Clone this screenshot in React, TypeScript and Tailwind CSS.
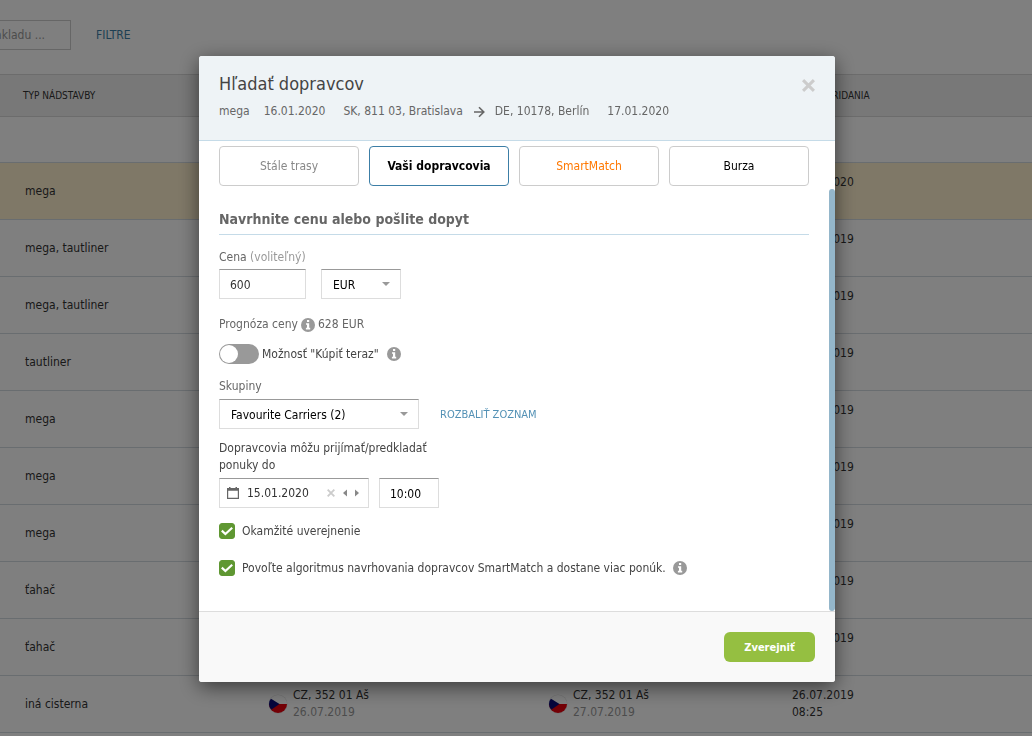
import React, { useState } from "react";

type Row = {
  type: string;
  added: string;
  time?: string;
  pickup?: string;
  delivery?: string;
  highlighted?: boolean;
};

const rows: Row[] = [
  { type: "mega", added: "16.01.2020", highlighted: true },
  { type: "mega, tautliner", added: "26.07.2019" },
  { type: "mega, tautliner", added: "26.07.2019" },
  { type: "tautliner", added: "26.07.2019" },
  { type: "mega", added: "26.07.2019" },
  { type: "mega", added: "26.07.2019" },
  { type: "mega", added: "26.07.2019" },
  { type: "ťahač", added: "26.07.2019" },
  { type: "ťahač", added: "26.07.2019" },
  { type: "iná cisterna", added: "26.07.2019", time: "08:25", pickup: "26.07.2019", delivery: "27.07.2019" },
];

function CzechFlag() {
  return (
    <svg viewBox="0 0 20 20" className="h-5 w-5 shrink-0" aria-hidden="true">
      <defs>
        <clipPath id="flag-circle">
          <circle cx="10" cy="10" r="9" />
        </clipPath>
      </defs>
      <circle cx="10" cy="10" r="9.5" fill="#e2e2e2" />
      <g clipPath="url(#flag-circle)">
        <rect width="20" height="10" fill="#ffffff" />
        <rect y="10" width="20" height="10" fill="#e8000c" />
        <path d="M0 3 L11.5 10 L0 18 Z" fill="#0a0a78" />
      </g>
    </svg>
  );
}

function Place({ date }: { date: string }) {
  return (
    <div className="flex items-center gap-[5px]">
      <CzechFlag />
      <div>
        <div>CZ, 352 01 Aš</div>
        <div className="text-[#999]">{date}</div>
      </div>
    </div>
  );
}

function Info({ label }: { label: string }) {
  return (
    <button type="button" aria-label={label} className="flex">
      <svg viewBox="0 0 14 14" className="h-3.5 w-3.5" aria-hidden="true">
        <circle cx="7" cy="7" r="7" fill="#999" />
        <path d="M6 2h2.2v2H6z M5 5.2h3.2v4.6h1V11.4H4.9V9.8h1.1V6.8H5z" fill="#fff" />
      </svg>
    </button>
  );
}

function Cross({ className }: { className: string }) {
  return (
    <svg viewBox="0 0 12 12" className={className} aria-hidden="true">
      <path d="M1 1 L11 11 M11 1 L1 11" stroke="currentColor" strokeWidth="2.8" />
    </svg>
  );
}

function Arrow() {
  return (
    <svg viewBox="0 0 12 12" className="mx-2.5 h-3 w-3" aria-hidden="true">
      <path d="M1 6 H10.5 M6 1.2 L10.8 6 L6 10.8" fill="none" stroke="#666" strokeWidth="1.6" />
    </svg>
  );
}

function CalendarIcon() {
  return (
    <svg viewBox="0 0 12 12" className="h-3 w-3 shrink-0" aria-hidden="true">
      <path d="M2 0h1.5v1h5V0H10v1h2v11H0V1h2z M1.2 3.8v7h9.6v-7z" fill="#666" fillRule="evenodd" />
    </svg>
  );
}

function Caret() {
  return (
    <svg viewBox="0 0 8 4" className="pointer-events-none absolute right-[11px] top-[13px] h-1 w-2" aria-hidden="true">
      <path d="M0 0 H8 L4 4 Z" fill="#999" />
    </svg>
  );
}

const field = "h-[30px] rounded-none border border-[#ddd] border-t-[#999] bg-white text-[12px] outline-none";

function Check({ id, children }: { id: string; children: React.ReactNode }) {
  return (
    <div className="flex h-4 items-center gap-[7px]">
      <span className="relative flex">
        <input
          id={id}
          type="checkbox"
          defaultChecked
          className="peer h-4 w-4 appearance-none rounded-[3px] border border-[#5f9732] bg-white checked:bg-[#5f9732]"
        />
        <svg
          viewBox="0 0 16 16"
          className="pointer-events-none absolute inset-0 h-4 w-4 opacity-0 peer-checked:opacity-100"
          aria-hidden="true"
        >
          <path d="M2.8 7.6 L6.4 11 L13.2 4.8" fill="none" stroke="#fff" strokeWidth="2.2" />
        </svg>
      </span>
      <label htmlFor={id} className="text-[#444]">
        {children}
      </label>
      {id === "smart" && <Info label="SmartMatch" />}
    </div>
  );
}

const tabs = [
  { name: "Stále trasy", style: "border-[#ccc] text-[#888]" },
  { name: "Vaši dopravcovia", style: "border-[#3c7ea6] font-bold text-black" },
  { name: "SmartMatch", style: "border-[#ccc] text-[#ff7800]" },
  { name: "Burza", style: "border-[#ccc] text-black" },
];

function CarrierDialog() {
  const [date, setDate] = useState("15.01.2020");
  return (
    <section
      role="dialog"
      aria-labelledby="dialog-title"
      className="flex w-[636px] max-w-full flex-col overflow-hidden rounded-[3px] bg-white shadow-[0_5px_20px_rgba(0,0,0,0.55)]"
    >
      <header className="flex items-start justify-between border-b border-[#c5dbe8] bg-[#eef3f6] px-5 pb-5 pt-4">
        <div>
          <h1 id="dialog-title" className="text-[18px] leading-6 text-[#444]">
            Hľadať dopravcov
          </h1>
          <div className="mt-[7px] flex items-center text-[#666]">
            <span>mega</span>
            <span className="ml-3.5">16.01.2020</span>
            <span className="ml-[18px]">SK, 811 03, Bratislava</span>
            <Arrow />
            <span>DE, 10178, Berlín</span>
            <span className="ml-[18px]">17.01.2020</span>
          </div>
        </div>
        <button type="button" aria-label="Zavrieť" className="mt-[7px] flex text-[#ccc]">
          <Cross className="h-[13px] w-[13px]" />
        </button>
      </header>

      <form className="relative flex flex-col px-5 pb-[35px] pt-[5px]">
        <div className="mr-1.5 grid grid-cols-4 gap-2.5">
          {tabs.map((t) => (
            <button key={t.name} type="button" className={`h-10 rounded-[4px] border bg-white pt-px ${t.style}`}>
              {t.name}
            </button>
          ))}
        </div>

        <h2 className="mr-1.5 mt-[23px] border-b border-[#c5dbe8] pb-[5px] text-[14px] font-bold leading-5 text-[#666]">
          Navrhnite cenu alebo pošlite dopyt
        </h2>

        <label htmlFor="price" className="mt-3.5 text-[#666]">
          Cena <span className="text-[#999]">(voliteľný)</span>
        </label>
        <div className="mt-[3px] flex gap-[15px]">
          <input id="price" defaultValue="600" className={`w-[87px] px-2.5 pt-0.5 text-[#333] ${field}`} />
          <div className="relative">
            <select aria-label="Mena" className={`w-20 appearance-none px-[11px] pt-0.5 text-black ${field}`}>
              <option>EUR</option>
            </select>
            <Caret />
          </div>
        </div>

        <div className="mt-[17px] flex items-center gap-[3px] text-[#666]">
          <span>Prognóza ceny</span>
          <Info label="Prognóza ceny" />
          <span>628 EUR</span>
        </div>

        <div className="mt-[11px] flex items-center">
          <input
            id="buy-now"
            type="checkbox"
            role="switch"
            className="relative h-5 w-10 appearance-none rounded-full bg-[#999] before:absolute before:left-px before:top-px before:h-[18px] before:w-[18px] before:rounded-full before:bg-white checked:bg-[#5f9732] checked:before:left-[21px]"
          />
          <label htmlFor="buy-now" className="ml-[3px] mr-2 text-[#444]">
            Možnosť "Kúpiť teraz"
          </label>
          <Info label="Kúpiť teraz" />
        </div>

        <label htmlFor="group" className="mt-3.5 text-[#666]">
          Skupiny
        </label>
        <div className="mt-1 flex items-center gap-[21px]">
          <div className="relative">
            <select id="group" className={`w-[200px] appearance-none px-[11px] pt-0.5 text-black ${field}`}>
              <option>Favourite Carriers (2)</option>
            </select>
            <Caret />
          </div>
          <a href="#list" className="text-[11px] text-[#5391b5]">
            ROZBALIŤ ZOZNAM
          </a>
        </div>

        <label htmlFor="date" className="mt-[11px] w-[220px] text-[#444]">
          Dopravcovia môžu prijímať/predkladať ponuky do
        </label>
        <div className="mt-1 flex gap-2.5">
          <div className={`flex w-[150px] items-center px-[7px] text-[#333] ${field}`}>
            <CalendarIcon />
            <input
              id="date"
              value={date}
              onChange={(e) => setDate(e.target.value)}
              className="ml-2 w-[72px] min-w-0 pt-px outline-none"
            />
            <button type="button" aria-label="Vymazať" className="ml-2 flex text-[#ccc]" onClick={() => setDate("")}>
              <Cross className="h-2 w-2" />
            </button>
            <button type="button" aria-label="Predchádzajúci deň" className="ml-2 flex">
              <svg viewBox="0 0 4 8" className="h-2 w-1" aria-hidden="true">
                <path d="M4 0.5 V7.5 L0 4 Z" fill="#888" />
              </svg>
            </button>
            <button type="button" aria-label="Nasledujúci deň" className="ml-2 flex">
              <svg viewBox="0 0 4 8" className="h-2 w-1" aria-hidden="true">
                <path d="M0 0.5 V7.5 L4 4 Z" fill="#888" />
              </svg>
            </button>
          </div>
          <input aria-label="Čas" defaultValue="10:00" className={`w-[60px] px-2.5 pt-0.5 text-black ${field}`} />
        </div>

        <div className="mt-[15px] flex flex-col gap-[21px]">
          <Check id="instant">Okamžité uverejnenie</Check>
          <Check id="smart">
            Povoľte algoritmus navrhovania dopravcov SmartMatch a dostane viac ponúk.
          </Check>
        </div>
        <div className="absolute bottom-0 right-0 top-12 w-1.5 rounded-[3px] bg-[#94b6ca]" />
      </form>

      <footer className="flex justify-end border-t border-[#ddd] bg-[#f9f9f9] p-5">
        <button
          type="submit"
          className="h-[30px] w-[91px] rounded-[6px] bg-[#95bf41] text-[11px] font-bold text-white"
        >
          Zverejniť
        </button>
      </footer>
    </section>
  );
}

export default function App() {
  return (
    <div className="relative h-screen overflow-hidden bg-white font-['DejaVu_Sans_Condensed','DejaVu_Sans',sans-serif] text-[12px] leading-[17px] text-[#333]">
      <main>
        <div className="flex items-center gap-[25px] pb-6 pt-5">
          <div className="flex w-[71px] justify-end">
            <input
              aria-label="Miesto nákladu"
              placeholder="Miesto nákladu ..."
              className="h-[30px] w-[140px] shrink-0 border border-[#ccc] pl-2 pr-[25px] text-right outline-none placeholder:text-[#999]"
            />
          </div>
          <a href="#filters" className="text-[#3c7ea6]">
            FILTRE
          </a>
        </div>
        <table className="w-full table-fixed border-collapse text-left">
          <colgroup>
            <col className="w-[268px]" />
            <col className="w-[280px]" />
            <col className="w-[244px]" />
            <col />
          </colgroup>
          <thead>
            <tr className="h-[42px] border-y border-[#d8d8d8] bg-[#f0f0f0] text-[10px]">
              <th className="pl-[23px] font-normal">TYP NÁDSTAVBY</th>
              <th />
              <th />
              <th className="font-normal">DÁTUM PRIDANIA</th>
            </tr>
          </thead>
          <tbody>
            <tr className="h-[46px] border-b border-[#d3dae0]">
              <td colSpan={4} />
            </tr>
            {rows.map((r, i) => (
              <tr key={i} className={`h-[57px] border-b border-[#d3dae0] ${r.highlighted ? "bg-[#fff1cf]" : ""}`}>
                <td className="pl-[25px]">{r.type}</td>
                <td>{r.pickup && <Place date={r.pickup} />}</td>
                <td>{r.delivery && <Place date={r.delivery} />}</td>
                <td>
                  <div>{r.added}</div>
                  <div>{r.time || "\u00a0"}</div>
                </td>
              </tr>
            ))}
          </tbody>
        </table>
      </main>
      <div className="fixed inset-0 flex items-center justify-center bg-black/50 pl-0.5 pt-0.5">
        <CarrierDialog />
      </div>
    </div>
  );
}
